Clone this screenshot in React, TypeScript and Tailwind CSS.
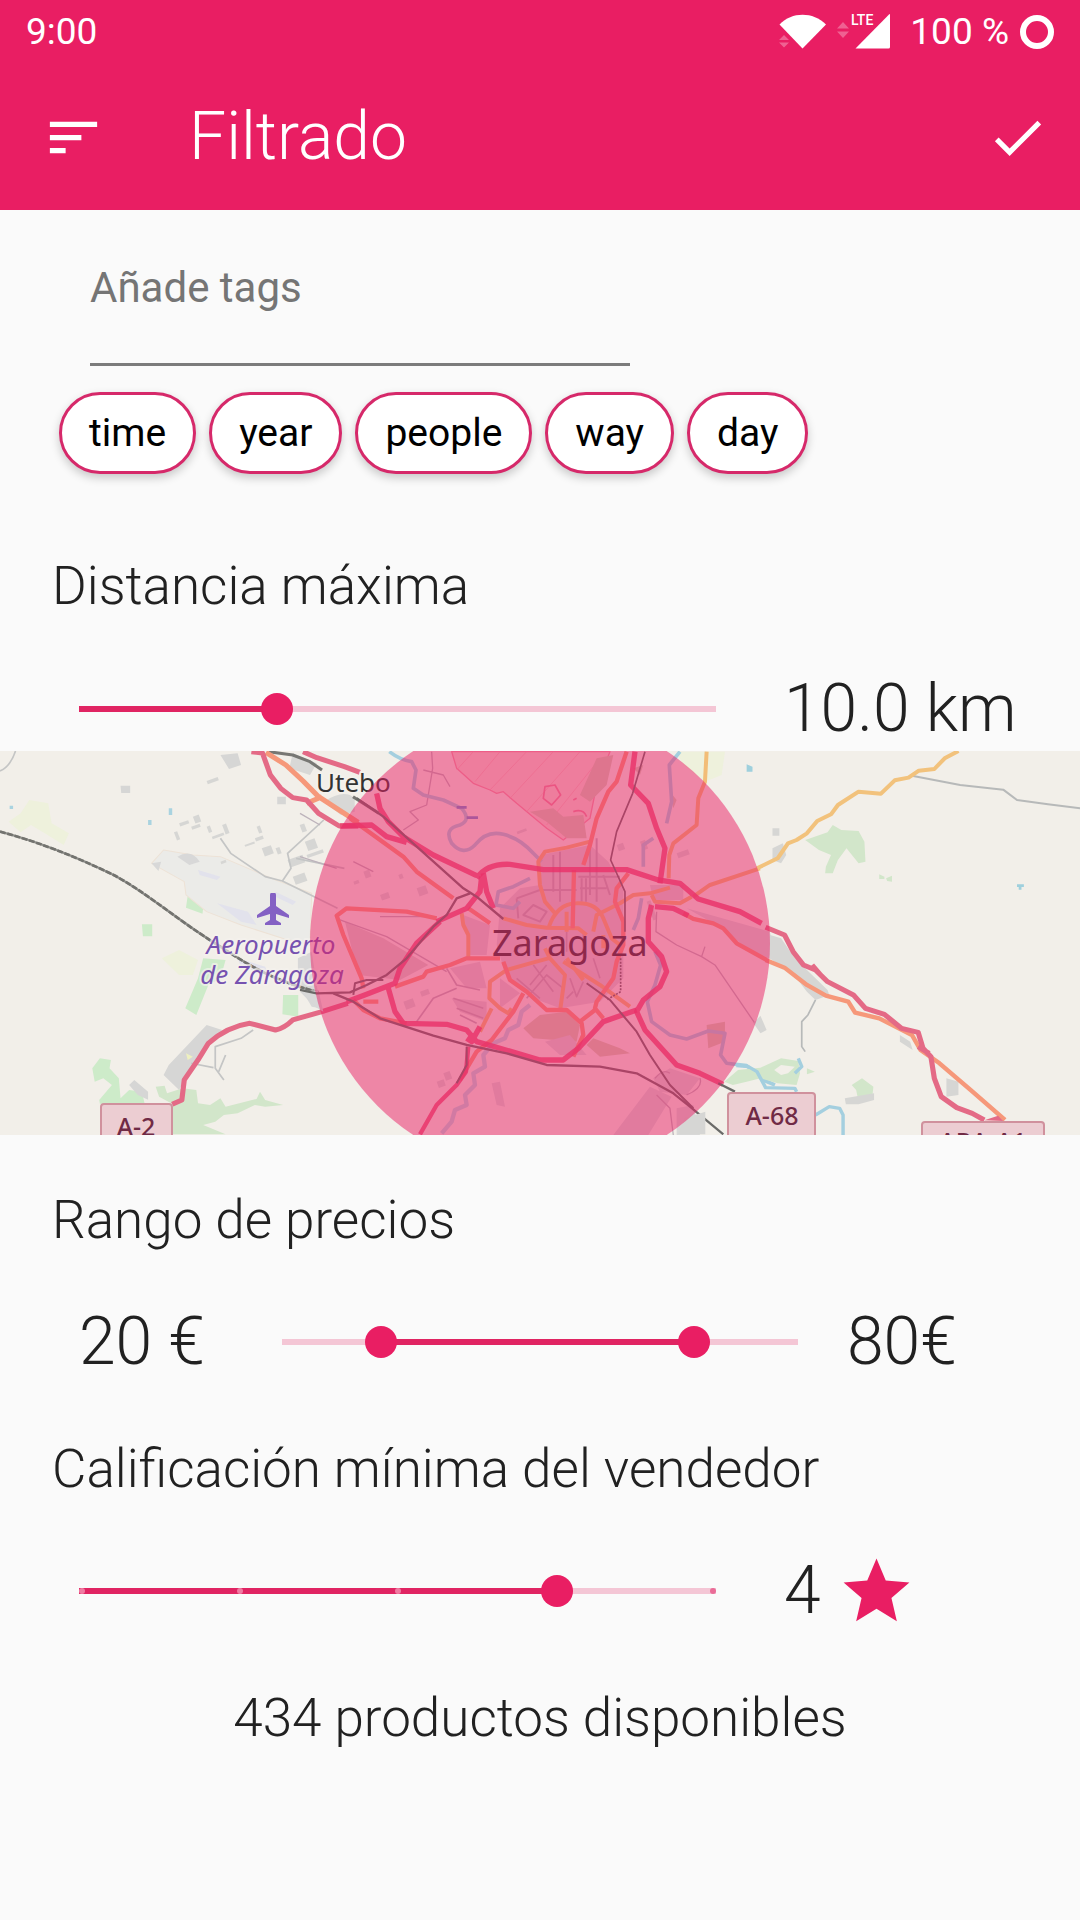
import { useState } from "react";

const PINK = "#e91e63";

type RangeTrackProps = { from: number; to: number; children: React.ReactNode };

function RangeTrack({ from, to, children }: RangeTrackProps) {
  return (
    <div className="relative flex h-8 flex-1 items-center">
      <div className="h-[6px] w-full bg-[#f4c6d5]">
        <div
          className="h-full bg-[#e02462]"
          style={{ marginLeft: `${from * 100}%`, width: `${(to - from) * 100}%` }}
        />
      </div>
      {children}
    </div>
  );
}

type ThumbProps = {
  label: string;
  min: number;
  max: number;
  value: number;
  onChange: (value: number) => void;
};

function Thumb({ label, min, max, value, onChange }: ThumbProps) {
  return (
    <input
      type="range"
      aria-label={label}
      min={min}
      max={max}
      value={value}
      onChange={(e) => onChange(Number(e.target.value))}
      className="pointer-events-none absolute -inset-x-4 inset-y-0 m-0 h-8 cursor-pointer appearance-none bg-transparent [&::-webkit-slider-runnable-track]:h-8 [&::-webkit-slider-thumb]:pointer-events-auto [&::-webkit-slider-thumb]:size-8 [&::-webkit-slider-thumb]:appearance-none [&::-webkit-slider-thumb]:rounded-full [&::-webkit-slider-thumb]:bg-[#e91e63]"
    />
  );
}

function StatusBar() {
  return (
    <div className="flex h-[64px] items-center justify-between px-[26px] text-[37px]">
      <span>9:00</span>
      <div className="flex items-center">
        <svg viewBox="0 0 48 36" className="h-9 w-12" fill="#fff" aria-hidden="true">
          <path d="M0.500 10.500C13-2.500 34-2.500 47 10.500L23.500 34.500Z" />
          <path d="M0 26L5 21L10 26ZM0 28.500L5 33.500L10 28.500Z" opacity=".3" />
        </svg>
        <svg viewBox="0 0 54 36" className="ml-[10px] h-9 w-[54px] overflow-visible" fill="#fff" aria-hidden="true">
          <path d="M0 14.500L6 8L12 14.500ZM0 17.500L6 24L12 17.500Z" opacity=".3" />
          <path d="M18.500 34.500L52 .5Q53 -.5 53 1V33Q53 34.500 51.500 34.500Z" />
          <text x="14" y="11" fontFamily="Roboto, sans-serif" fontSize="14" fontWeight="500">
            LTE
          </text>
        </svg>
        <span className="ml-[19px]">100 %</span>
        <span className="ml-[11px] size-[34px] rounded-full border-6 border-white" />
      </div>
    </div>
  );
}

function AppBar() {
  return (
    <div className="flex h-[146px] items-center pr-[31px] pl-[42px]">
      <button type="button" aria-label="Ordenar">
        <svg viewBox="0 0 24 24" className="size-[63px]" fill="#fff">
          <path d="M3 18h6v-2H3v2zM3 6v2h18V6H3zm0 7h12v-2H3v2z" />
        </svg>
      </button>
      <h1 className="ml-[84px] flex-1 text-[66px] leading-none font-light">Filtrado</h1>
      <button type="button" aria-label="Aplicar">
        <svg viewBox="0 0 24 24" className="size-[63px]" fill="#fff">
          <path d="M9 16.200L4.800 12l-1.400 1.400L9 19 21 7l-1.400-1.400L9 16.200z" />
        </svg>
      </button>
    </div>
  );
}

const MAP_FONT = "Noto Sans, sans-serif";

function Buildings({ items }: { items: number[][] }) {
  return (
    <g fill="#d6d6d4">
      {items.map(([x, y, w, h], i) => (
        <rect key={i} x={x} y={y} width={w} height={h} transform={`rotate(-20 ${x} ${y})`} />
      ))}
    </g>
  );
}

function WestTile() {
  return (
    <g transform="matrix(.3444 0 0 .3333 0 -6)" fill="none" strokeLinejoin="round">
      <g fill="#cdebc9">
        <path d="M545 452L592 470L588 506L540 488ZM412 538H442V574H415ZM590 640L655 645L640 700L605 720L570 810L538 790L575 700ZM822 750H866V815L820 808Z" />
        <path d="M268 970L290 940L322 945L318 970L345 1000L350 1060L375 1035L412 1040L420 1076H290L288 1065L325 1020L300 1000L275 1010Z" />
        <path d="M452 1025L478 1022L485 1045L530 1030L570 1035L575 1075L610 1080L640 1060L655 1085L745 1062L755 1040L770 1065L822 1080L770 1085L740 1080L690 1105L650 1110L625 1130L590 1140L655 1168H500V1076L462 1055Z" fill="#d2e6ca" />
      </g>
      <path d="M25 230L60 205L85 165L140 175L150 235L200 265L185 300L130 265L90 240L60 262ZM470 640L520 615L575 645L560 690L520 690Z" fill="#eef1dc" />
      <path d="M440 355L475 315L560 330L640 335L800 405L905 445L900 600L820 580L700 540L600 500L540 450L535 410Z" fill="#ebebe8" stroke="#ede2d6" strokeWidth="3" />
      <path d="M575 375L640 395L630 405L580 390ZM630 475L720 500L745 540L700 530ZM800 440L860 470L850 480L800 455ZM690 640L770 665L780 690L700 665Z" fill="#e2e2ec" />
      <path d="M515 335Q555 310 580 350L550 360ZM440 355L468 350L460 378ZM865 640L905 620L930 790L905 785L865 715Z" fill="#d8d8d8" />
      <path d="M600 840L645 855L545 985L520 1035L475 990L490 960ZM390 1005L430 1040V1064L400 1050L375 1020ZM640 30L690 25L700 60L665 72ZM350 122H378V144H352ZM805 155H830V178H805Z" fill="#d6d6d5" />
      <path d="M850 25L920 55L900 90L840 70ZM940 170Q1000 130 1030 160V200L990 210Z" fill="#d8d8d6" />
      <Buildings items={[[505, 262, 10, 26], [520, 235, 28, 10], [560, 215, 18, 22], [555, 245, 26, 10], [600, 245, 10, 20], [615, 275, 36, 8], [645, 240, 12, 30], [710, 300, 30, 6], [740, 280, 24, 10], [760, 310, 28, 26], [800, 310, 12, 20], [835, 345, 46, 24], [850, 395, 36, 26], [885, 290, 30, 30], [890, 330, 50, 10], [870, 240, 14, 24], [600, 108, 34, 10], [640, 350, 16, 8], [745, 245, 10, 22]]} />
      <g stroke="#c4c5c5" strokeWidth="5">
        <path d="M0 78Q30 65 45 18M640 280L670 325L770 395L820 408L980 490M820 408L845 370L835 325L940 225M860 340L1000 370" />
        <path d="M735 855L700 880L625 905V970L650 1005M555 955L620 968M655 930L635 980" />
      </g>
      <path d="M430 225H440V240H430ZM490 190H500V210H490ZM28 182H38V192H28Z" fill="#a9d3e0" />
      <path d="M540 925L560 935L545 945Z" fill="#eef0c0" />
      <path d="M0 260C110 290 220 335 330 390C430 445 520 530 640 605C740 675 810 710 925 742" stroke="#8f8f8b" strokeWidth="7" />
      <path d="M0 260C110 290 220 335 330 390C430 445 520 530 640 605C740 675 810 710 925 742" stroke="#73736f" strokeWidth="8" strokeDasharray="17 5" />
      <path d="M780 20L850 30L900 50L935 75M1025 155L1100 205" stroke="#777773" strokeWidth="9" />
      <path d="M772 22L830 60L880 108L925 155L965 182L1040 232M890 175L935 155" stroke="#f6987a" strokeWidth="15" />
      <path d="M730 20L762 24L785 90L815 130L850 158L890 165L925 205L985 243L1040 243M880 20L920 38L1000 65L1045 82" stroke="#e46a86" strokeWidth="15" />
      <path d="M500 1078L528 1065L535 1005L575 945L605 895Q660 845 725 835L800 855Q825 850 850 825L935 800L1010 775" stroke="#e46a86" strokeWidth="15" />
    </g>
  );
}

function CenterTile() {
  return (
    <g transform="matrix(.3333 0 0 .3333 300 -6)" fill="none" strokeLinejoin="round">
      <path d="M455 20L470 70L520 115L570 135L590 145L610 140L650 175L740 250L790 285L870 220L890 120L930 20Z" fill="#f3dcd6" stroke="#f09cab" strokeWidth="4" />
      <path d="M520 20L470 75M600 20L525 110M680 20L570 135M760 20L630 160M840 20L680 200M900 40L740 240" stroke="#f0b4b6" strokeWidth="2" />
      <path d="M890 40L940 30L920 120L870 170L840 150ZM690 200L760 190L790 215L850 210L860 280L800 280L740 230ZM1000 70L1030 60L1020 90ZM1110 140L1130 165L1120 190Z" fill="#d2cdb8" />
      <path d="M735 125L765 120L782 150L755 180L730 160ZM820 200Q850 190 860 215M820 165L830 160" stroke="#ec8ba0" strokeWidth="5" />
      <path d="M720 330L870 300L925 350L970 430V700L900 770L780 790L700 760L620 700L590 600L600 490L660 430L720 420Z" fill="#dbd5d6" />
      <path d="M490 510L570 540L560 630H510ZM450 670L540 650L560 730L500 730ZM455 760L560 770L560 830L480 800ZM600 700L660 745L600 790ZM1050 420H1150V465H1060Z" fill="#dbd5d6" />
      <path d="M135 530L250 580L385 660L300 705L175 690Z" fill="#d8d0cc" />
      <path d="M670 850L720 810L800 800L840 840L830 890L700 880ZM880 880L960 910L990 925L900 935L860 900ZM1220 840L1275 830V890L1225 910Z" fill="#d2cfb4" />
      <path d="M940 1170L1050 1025L1115 1055L1045 1170ZM575 1015L600 1010L615 1085L590 1080ZM1060 1000L1110 970L1200 1000L1160 1050L1080 1040ZM1130 1090L1180 1080L1200 1170H1130ZM0 740L55 735L70 800L45 785ZM1160 490L1410 560L1430 650L1340 610L1260 545ZM735 890L810 870L860 930L780 930Z" fill="#d8d8d8" />
      <Buildings items={[[190, 380, 18, 22], [240, 450, 26, 18], [350, 430, 28, 26], [295, 390, 12, 14], [160, 410, 16, 10], [1040, 470, 12, 60], [1130, 325, 36, 16], [1020, 290, 16, 28], [950, 300, 20, 20], [310, 770, 30, 26], [360, 740, 26, 16], [430, 985, 20, 24], [410, 1010, 22, 20], [650, 260, 30, 8]]} />
      <path d="M1130 20H1275L1265 90L1215 110L1150 60Z" fill="#eef1dc" />

      <g stroke="#bdb3bb" strokeWidth="4">
        <path d="M395 20L398 70L380 180L330 200L355 225L310 255M370 75L430 90L450 125M120 525L260 575L440 680M240 515H410" />
        <path d="M650 460L720 435H830M650 460L655 520M670 510L700 480L740 500L720 530ZM760 330V440M780 320V470M870 290V450M890 280V470M835 395H960M840 430H920M910 390L930 450M845 400V470M858 400V470" strokeWidth="6" />
        <path d="M680 760L740 690L790 730M650 700L720 760M700 660L760 740M810 700L830 755L850 710M880 640L900 700M740 660L690 720M350 830L400 760L470 730M440 670L470 720L540 735M460 760L550 790M470 790L550 820M480 810L530 835M820 740L800 760M800 560V620M850 560V640M690 590L640 620" strokeWidth="5" />
        <path d="M1070 500L1068 560L1130 600L1205 635L1245 660L1365 835M1205 635L1215 605M1070 1050L1110 1090L1120 1170M1065 1000Q1090 970 1110 985M1160 1050Q1210 1030 1200 1000" />
        <path d="M0 205L60 240M0 335L110 370M160 350L220 380" />
      </g>
      <g stroke="#a4cfdf" strokeWidth="11">
        <path d="M268 20Q300 45 335 50L348 75L340 130L370 150L430 165L485 190Q515 225 480 240Q430 250 455 295Q490 335 525 300Q560 255 610 268Q660 280 700 325L725 350" />
        <path d="M690 400L640 425L595 440L588 480L640 490L660 470M1140 20L1108 60L1115 170L1100 235M1060 280L1030 300V365M1025 460L1015 520L1000 555" />
        <path d="M1065 620L1082 660L1065 720L1042 770L1055 830L1110 870L1160 882L1225 858L1275 865L1262 930L1280 955L1340 962L1390 1005L1425 1020" />
        <path d="M690 780L665 800L655 840L625 855L615 880L580 895L550 930L555 965L520 985L525 1020L495 1050L500 1080L465 1095L455 1130L425 1165" strokeWidth="13" opacity=".75" />
      </g>
      <path d="M470 187H500M500 218H534" stroke="#6f8fd0" strokeWidth="8" />

      <g stroke="#f2bd77" strokeWidth="12">
        <path d="M870 290L800 308L735 320L715 350L720 420L735 470L765 505M610 520L680 540L740 548L835 550L860 570M745 550Q770 475 830 475Q890 472 910 520L935 580L960 600M880 560L890 510L960 475L1000 450L1050 445L1110 428" />
        <path d="M1220 20L1215 110L1195 160L1190 240L1120 295L1108 330L1106 400M1180 455L1230 420L1380 370M1055 450L1065 470L1140 475L1175 455" />
        <path d="M735 610L750 640L795 690L780 800M745 640L690 655L620 675L570 710L568 760L600 790L625 805L635 790M575 790L540 860M790 650L900 720L990 785M485 505L490 540L505 570L505 640M800 640L850 705M910 570V610M800 500V560" />
      </g>
      <g stroke="#f6987a" strokeWidth="13">
        <path d="M150 220L310 335L350 380L460 460M410 520L320 500L140 490L110 512L130 570L185 700L190 730M160 765L190 795L240 820L320 835M285 725L370 695L380 680L450 660L500 640L600 640M190 770H235" />
        <path d="M980 20L950 110L925 140L890 220L870 300L850 360M822 375L818 550M985 385L950 430L945 470L970 530V600L950 650L940 700L890 770L885 790L910 820M610 650L630 705L680 740L740 795L800 795L845 835L850 870L820 935M670 745L640 800L575 885L530 920L480 1005M505 490L570 535M840 830L885 795" />
        <path d="M1150 505L1180 522L1240 535L1270 550L1310 595L1400 645" />
      </g>
      <g stroke="#e8456f" strokeOpacity=".82" strokeWidth="16">
        <path d="M230 145L240 190L265 230L310 275L400 330L530 392M120 243L215 240L260 275L320 292M530 400Q560 355 630 358L730 374H980L1075 405L1140 415L1195 462L1320 500L1385 535" />
        <path d="M545 395L540 440L500 490L410 530M550 385L560 440L580 490" />
        <path d="M420 530L350 595L300 670L285 715L200 748L140 770M265 730L285 800L310 835L440 838L500 855L530 890L600 910L720 945L790 945L835 910L910 830L1010 795M540 845L515 890L500 880" />
        <path d="M1005 20L992 120L1045 175L1070 250L1095 310L1080 415M1055 480L1045 520V590L1085 635L1100 680L1080 725L1030 765L1010 800L1035 855L1130 960L1200 985L1270 1018M1065 485L1120 490L1165 512" />
        <path d="M505 905L498 980L470 1020L410 1080L360 1168" strokeWidth="13" />
      </g>
      <g stroke="#6a6a68" strokeWidth="7">
        <path d="M170 160L250 215L490 430L530 455L610 522M510 445L470 460L440 510L400 545L320 640L260 690L200 720L150 742L50 745L0 735M100 745L160 770L240 820L400 872L500 900L620 925L740 960L900 965L1010 985L1120 1045L1170 1085L1270 1168" />
        <path d="M1035 20L998 145L950 260L932 345L975 440V560" strokeWidth="5" />
        <path d="M962 640V740L920 765" strokeWidth="5" strokeDasharray="6 4" />
        <path d="M860 715L930 765L1010 860L1050 930L1110 1020L1180 1090M500 905V960L470 1015M160 750L165 715L200 705H250" strokeWidth="6" />
        <path d="M1255 1015L1305 1040" />
      </g>
    </g>
  );
}

function EastTile() {
  return (
    <g transform="matrix(.3444 0 0 .3333 540 -6)" fill="none" strokeLinejoin="round">
      <g fill="#d2e6ca">
        <path d="M770 285L835 262L850 240L875 255L925 258L942 290L945 350L925 355L890 310L865 345L850 385L828 385L830 365L845 330L810 315Z" />
        <path d="M985 388L1000 395V402H985ZM1005 400L1022 392V410L1008 408Z" />
        <path d="M905 1020L935 1000L968 1025L965 1055L925 1070L918 1035ZM535 1010L575 975L640 968L700 940L750 948L755 985L745 1020L690 1015L640 1000L600 1010L560 1020ZM775 970L798 980L775 988Z" />
      </g>
      <path d="M680 975L700 960L740 965L720 985L700 990Z" fill="#f2efe9" />
      <path d="M668 570L700 580L740 640L835 735L840 750L800 765L775 740L745 700L668 640ZM675 310L705 295L715 330L700 355L675 345ZM675 250H695V272H675ZM1045 870L1075 890L1082 915L1045 890ZM1180 1000L1215 1010V1050L1180 1055ZM885 1060L970 1045V1065L925 1078H888ZM620 835L640 812L658 855L640 865ZM420 1120L480 1100V1168H400Z" fill="#d6d6d4" />
      <path d="M600 58L617 65V80H600ZM1385 418H1405V426H1398V434H1390V426H1385Z" fill="#9fd0dd" />
      <g stroke="#b7b9b9" strokeWidth="6">
        <path d="M1080 92L1220 120L1345 134L1385 165L1475 178L1570 190" />
        <path d="M800 765L778 810L760 830V905L770 920" strokeWidth="5" />
      </g>
      <g stroke="#a4cfdf" strokeWidth="10">
        <path d="M570 962L605 965L630 980L655 1028L740 1030L745 1040M750 940L760 965L740 985M800 1110L840 1085L870 1090L880 1110V1170" />
      </g>
      <path d="M630 370L690 340L720 295L745 285L775 265L805 228L845 208L865 180L925 140L990 146L1030 106L1070 98L1100 77L1145 72L1175 40L1215 18" stroke="#f2c27c" strokeWidth="12" />
      <path d="M655 645L710 668L775 720L830 752L895 770L915 803L985 820L1080 870L1105 915L1160 955L1250 1035L1350 1125" stroke="#f6987a" strokeWidth="13" />
      <path d="M655 547L710 570L735 620L765 660L800 675L835 710L910 750L945 790L1000 808L1050 850L1098 862L1112 910L1135 935L1145 1000L1165 1055L1210 1088L1255 1105L1290 1125M1098 905L1130 925M790 660L815 690" stroke="#e46a86" strokeWidth="15" />
      <path d="M1290 1126L1330 1112L1345 1128Z" fill="#e46a86" />
    </g>
  );
}

type ShieldProps = { x: number; y: number; width: number; textX: number; baseline: number; label: string };

function RoadShield({ x, y, width, textX, baseline, label }: ShieldProps) {
  return (
    <g>
      <rect x={x} y={y} width={width} height="46" rx="3" fill="#eccdd2" stroke="#d0919d" strokeWidth="2" />
      <text x={textX} y={baseline} textAnchor="middle" fontSize="25" fontWeight="500" fill="#702a45">
        {label}
      </text>
    </g>
  );
}

function DistanceMap() {
  return (
    <svg
      viewBox="0 0 1080 384"
      preserveAspectRatio="xMidYMid slice"
      className="block h-[384px] w-full"
      role="img"
      aria-label="Mapa de Zaragoza con el radio de búsqueda"
      fontFamily={MAP_FONT}
    >
      <rect width="1080" height="384" fill="#f2efe9" />
      <WestTile />
      <CenterTile />
      <EastTile />
      <g stroke="#f5f2ee" strokeWidth="4" strokeOpacity=".7" paintOrder="stroke" strokeLinejoin="round">
        <text x="316" y="41" fontSize="26" fill="#333">
          Utebo
        </text>
        <text x="492" y="205" fontSize="36" fill="#333" strokeOpacity="0">
          Zaragoza
        </text>
        <g fontSize="26" fontStyle="italic" fill="#7652b0" textAnchor="middle">
          <text x="271" y="203">Aeropuerto</text>
          <text x="272" y="233">de Zaragoza</text>
        </g>
      </g>
      <path
        d="M271 142H275Q276 142 276 144V155L289 164V167L276 163V169L281 172V174H265V172L270 169V163L257 167V164L270 155V144Q270 142 271 142Z"
        fill="#8461c4"
      />
      <RoadShield x={101} y={353} width={71} textX={136} baseline={385} label="A-2" />
      <RoadShield x={728} y={342} width={87} textX={772} baseline={374} label="A-68" />
      <RoadShield x={922} y={371} width={122} textX={983} baseline={400} label="ARA-A1" />
      <circle cx="540" cy="192" r="230" fill={PINK} fillOpacity=".5" />
    </svg>
  );
}

const TAGS = ["time", "year", "people", "way", "day"];

export default function App() {
  const [distance, setDistance] = useState(10);
  const [minPrice, setMinPrice] = useState(20);
  const [maxPrice, setMaxPrice] = useState(80);
  const [rating, setRating] = useState(4);

  return (
    <div className="min-h-screen bg-[#fafafa] font-[Roboto,sans-serif] text-[#212121]">
      <header className="bg-[#e91e63] text-white">
        <StatusBar />
        <AppBar />
      </header>

      <main>
        <section className="pt-[36px]">
          <input
            type="text"
            aria-label="Añade tags"
            placeholder="Añade tags"
            className="ml-[90px] block h-[120px] w-1/2 border-b-3 border-[#7b7b7b] bg-transparent pb-[34px] text-[42px] outline-none placeholder:text-[#757575]"
          />
          <div className="mt-[26px] flex flex-wrap gap-[13px] px-[59px]">
            {TAGS.map((tag) => (
              <button
                key={tag}
                type="button"
                className="h-[82px] rounded-full border-3 border-[#d6296a] bg-white px-[27px] text-[39px] leading-none text-black shadow-[0_4px_10px_rgba(0,0,0,0.2)]"
              >
                {tag}
              </button>
            ))}
          </div>
        </section>

        <section>
          <h2 className="mt-[80px] px-[52px] text-[53px] leading-[64px] font-light">Distancia máxima</h2>
          <div className="mt-[49px] flex h-[84px] items-center pl-[79px]">
            <RangeTrack from={0} to={(distance - 1) / 29}>
              <Thumb label="Distancia máxima" min={1} max={30} value={distance} onChange={setDistance} />
            </RangeTrack>
            <span className="w-[364px] pl-[68px] text-[66px] leading-none font-light">{distance.toFixed(1)} km</span>
          </div>
          <DistanceMap />
        </section>

        <section>
          <h2 className="mt-[53px] px-[52px] text-[53px] leading-[64px] font-light">Rango de precios</h2>
          <div className="mt-[50px] flex h-[80px] items-center pl-[79px] text-[66px] leading-none font-light">
            <span className="w-[203px]">{minPrice} €</span>
            <RangeTrack from={(minPrice - 1) / 99} to={(maxPrice - 1) / 99}>
              <Thumb label="Precio mínimo" min={1} max={100} value={minPrice} onChange={(v) => setMinPrice(Math.min(v, maxPrice))} />
              <Thumb label="Precio máximo" min={1} max={100} value={maxPrice} onChange={(v) => setMaxPrice(Math.max(v, minPrice))} />
            </RangeTrack>
            <span className="w-[282px] pl-[49px]">{maxPrice}€</span>
          </div>
        </section>

        <section>
          <h2 className="mt-[55px] px-[52px] text-[53px] leading-[64px] font-light">Calificación mínima del vendedor</h2>
          <div className="mt-[50px] flex h-[80px] items-center pl-[79px]">
            <RangeTrack from={0} to={(rating - 1) / 4}>
              <div className="absolute inset-x-0 flex justify-between" aria-hidden="true">
                {[1, 2, 3, 4, 5].map((step) => (
                  <span
                    key={step}
                    className={step <= rating ? "size-[6px] rounded-full bg-[#f07ba2]" : "size-[6px] rounded-full bg-[#ea6c97]"}
                  />
                ))}
              </div>
              <Thumb label="Calificación mínima del vendedor" min={1} max={5} value={rating} onChange={setRating} />
            </RangeTrack>
            <div className="flex w-[364px] items-center pl-[68px]">
              <span className="text-[66px] leading-none font-light">{rating}</span>
              <svg viewBox="0 0 24 24" className="ml-[16px] size-[79px]" fill={PINK} aria-hidden="true">
                <path d="M12 17.270L18.180 21l-1.640-7.030L22 9.240l-7.190-.610L12 2 9.190 8.630 2 9.240l5.460 4.730L5.820 21z" />
              </svg>
            </div>
          </div>
        </section>

        <p className="mt-[55px] pb-[100px] text-center text-[53px] leading-[64px] font-light">434 productos disponibles</p>
      </main>
    </div>
  );
}
